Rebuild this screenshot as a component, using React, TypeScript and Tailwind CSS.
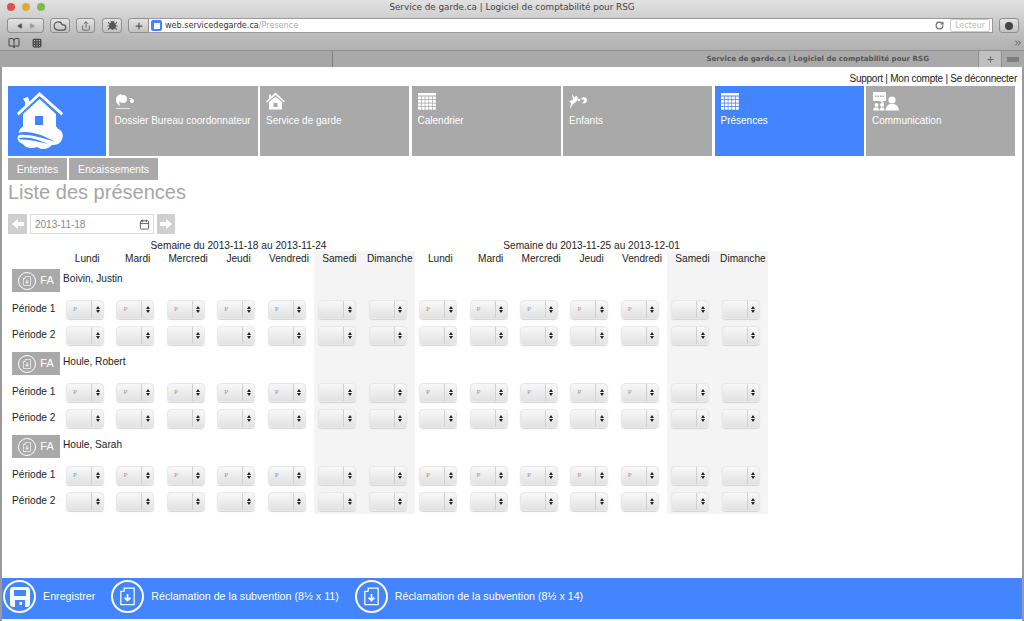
import { BookOpen, Calendar, ChevronsRight, Cloud, Grid3x3, Play, Plus, RotateCw, Share, Bug } from "lucide-react";

const days = ["Lundi", "Mardi", "Mercredi", "Jeudi", "Vendredi", "Samedi", "Dimanche"];
const columns = [...days, ...days];
const kids = ["Boivin, Justin", "Houle, Robert", "Houle, Sarah"];

function isWeekend(i: number) {
  return i % 7 >= 5;
}

function GridIcon() {
  return (
    <svg width="18" height="17" viewBox="0 0 18 17" fill="#fff">
      <rect x="0" y="0" width="18" height="2.5" />
      {[3.5, 7, 10.5, 14].map((y) =>
        [0, 3.7, 7.4, 11.1, 14.8].map((x) => <rect key={`${x}-${y}`} x={x} y={y} width="3" height="2.7" />)
      )}
    </svg>
  );
}

function HouseIcon() {
  return (
    <svg width="19" height="18" viewBox="0 0 19 18" fill="#fff">
      <path d="M9.5 0.5 L19 9.5 L18 10.5 L9.5 3 L1 10.5 L0 9.5 L3 6.6 V2.5 H5 V4.8 Z" />
      <path d="M9.5 4.5 L16 10 V17.5 H3 V10 Z M7.5 11 V15 H11.5 V11 Z" fillRule="evenodd" />
    </svg>
  );
}

function MoonIcon() {
  return (
    <svg width="22" height="17" viewBox="0 0 22 17" fill="#fff">
      <path d="M7 1 C3 1 1 4 1 7 C1 10 3 12 5 13 C4 10 4 5 7 1 Z" />
      <circle cx="8" cy="6" r="4" />
      <circle cx="17" cy="8" r="2" />
      <rect x="14" y="5" width="3" height="1" />
      <rect x="1" y="15" width="14" height="1" opacity="0.7" />
    </svg>
  );
}

function StorkIcon() {
  return (
    <svg width="20" height="17" viewBox="0 0 20 17" fill="#fff">
      <path d="M3 1 L5 4 L8 3 L9 6 L7 9 L4 11 L1 16 L2 10 L0 8 L4 7 Z" />
      <path d="M12 6 C14 3 18 4 18 7 C18 10 15 11 13 10 L15 8 C16 7 15 6 14 7 Z" />
      <circle cx="10" cy="7" r="1.2" />
    </svg>
  );
}

function PeopleIcon() {
  return (
    <svg width="28" height="19" viewBox="0 0 28 19" fill="#fff">
      <path d="M1 0 H14 V9 H11 L12 12 L8 9 H1 Z" />
      <rect x="3" y="3.5" width="1.5" height="1.5" fill="#a9a9a9" />
      <rect x="5.5" y="3.5" width="1.5" height="1.5" fill="#a9a9a9" />
      <rect x="8" y="3.5" width="1.5" height="1.5" fill="#a9a9a9" />
      <rect x="10.5" y="3.5" width="1.5" height="1.5" fill="#a9a9a9" />
      <circle cx="20" cy="8" r="3.6" />
      <path d="M13.5 18.5 C14 13 17 12 20 12 C23 12 26.5 13 27 18.5 Z" />
      <circle cx="4.5" cy="13" r="2" />
      <circle cx="10" cy="13" r="2" />
      <path d="M1 18.5 C1 16 3 15.5 4.5 15.5 C6 15.5 7 16 7 18.5 Z" />
      <path d="M7.5 18.5 C7.5 16 9 15.5 10 15.5 C11.5 15.5 12.5 16 12.5 18.5 Z" />
    </svg>
  );
}

function LogoIcon() {
  return (
    <svg width="46" height="58" viewBox="0 0 46 58" fill="#fff">
      {/* roof and chimney */}
      <path d="M22.5 0 L46 21 L44.5 23.5 L22.5 4 L1.5 23.5 L0 21 L8 13.5 V10 L6 6.5 L11 5 L12.5 9.5 Z" />
      {/* walls with the door cut out */}
      <path fillRule="evenodd" d="M22.5 7 L39 22 V36 H6 V22 Z M18 24 V34 H26 V24 Z" />
      {/* cloud */}
      <path d="M7 34 C11 31 15 32 18 33 H26 C28 32 30 32 32 34 C36 32 40 34 41 37 C45 38 47 43 45 47 C44 52 39 53 35 53 C31 58 24 58 20 55 C15 57 8 56 6 52 C1 51 -1 46 2 43 C1 38 4 36 7 34 Z" />
      {/* waves */}
      <path d="M1 41 C12 38 26 43 38 50 C26 46 12 42 2 43 Z" fill="#4285ff" />
      <path d="M2 46 C12 44 22 48 31 52 C22 50 12 47 3 47.5 Z" fill="#4285ff" />
    </svg>
  );
}

function SaveIcon() {
  return (
    <svg width="20" height="20" viewBox="0 0 20 20" fill="#fff">
      <path
        fillRule="evenodd"
        d="M3 0 H17 C18.7 0 20 1.3 20 3 V17 C20 18.7 18.7 20 17 20 H3 C1.3 20 0 18.7 0 17 V3 C0 1.3 1.3 0 3 0 Z M4 3 V9 H16 V3 Z M5 13 V20 H15 V13 Z M9.5 15 H12 V18 H9.5 Z"
      />
    </svg>
  );
}

function ClaimIcon({ size = 15 }: { size?: number }) {
  return (
    <svg width={size} height={size * 1.25} viewBox="0 0 18 22" fill="none" stroke="#fff" strokeWidth="1.5">
      <path d="M5 5 V1 H17 V21 H1 V5 H5 L1 5" />
      <path d="M9 8 V16 M5.5 12.5 L9 16 L12.5 12.5" strokeWidth="2.2" />
    </svg>
  );
}

function ChunkyArrow({ left }: { left?: boolean }) {
  return (
    <svg width="12" height="10" viewBox="0 0 12 10" fill="#fff" className={left ? "rotate-180" : ""}>
      <path d="M0 3 H6 V0 L12 5 L6 10 V7 H0 Z" />
    </svg>
  );
}

function Tile({ icon, label, active }: { icon: React.ReactNode; label: string; active?: boolean }) {
  return (
    <div className={`flex min-w-0 flex-1 flex-col px-[6px] pt-[5px] text-[10px] text-white ${active ? "bg-[#4285ff]" : "bg-[#a9a9a9]"}`}>
      <div className="flex h-[20px] items-center">{icon}</div>
      <div className="mt-[2px] whitespace-nowrap">{label}</div>
    </div>
  );
}

function FakeSelect({ value }: { value?: string }) {
  return (
    <div className="flex h-[19px] w-[38px] rounded-[4px] border border-[#e8e8e8] bg-linear-to-b from-[#f8f8f8] to-[#e2e2e2] shadow-[0_1px_1px_#d4d4d4]">
      <div className="flex w-[25px] items-center border-r border-[#d0d0d0] pl-[6px] font-['Liberation_Serif',serif] text-[7px] text-[#999]">{value}</div>
      <div className="flex flex-1 flex-col items-center justify-center gap-[1px]">
        <span className="h-0 w-0 border-x-[2.5px] border-b-[3px] border-x-transparent border-b-[#222]" />
        <span className="h-0 w-0 border-x-[2.5px] border-t-[3px] border-x-transparent border-t-[#222]" />
      </div>
    </div>
  );
}

function ChromeButton({ children, className }: { children: React.ReactNode; className?: string }) {
  return (
    <div className={`flex h-[15px] items-center justify-center rounded-[3px] border border-[#8f8f8f] bg-linear-to-b from-[#e4e4e4] to-[#c2c2c2] text-[#555] ${className ?? ""}`}>
      {children}
    </div>
  );
}

function PeriodRow({ label, value }: { label: string; value?: string }) {
  return (
    <>
      <div className="flex h-[26px] items-center whitespace-nowrap pl-[10px]">{label}</div>
      {columns.map((_, i) => (
        <div key={i} className={`flex h-[26px] items-center pl-[4px] ${isWeekend(i) ? "bg-[#f4f4f4]" : ""}`}>
          <FakeSelect value={isWeekend(i) ? undefined : value} />
        </div>
      ))}
    </>
  );
}

export default function App() {
  return (
    <div className="flex h-[621px] w-[1024px] flex-col overflow-hidden bg-[#9a9a9a] font-['Liberation_Sans',sans-serif] text-[11px] text-[#222]">
      {/* browser chrome */}
      <div className="h-[35px] bg-linear-to-b from-[#e2e2e2] to-[#bdbdbd]">
        <div className="relative flex h-[16px] items-center justify-center font-['DejaVu_Sans',sans-serif] text-[8.8px] text-[#444]">
          <div className="absolute left-[7px] top-[3px] flex gap-[7px]">
            <span className="h-[8px] w-[8px] rounded-full bg-[#e0504a]" />
            <span className="h-[8px] w-[8px] rounded-full bg-[#e0a93c]" />
            <span className="h-[8px] w-[8px] rounded-full bg-[#7fb850]" />
          </div>
          Service de garde.ca | Logiciel de comptabilité pour RSG
        </div>
        <div className="flex h-[19px] items-center pl-[7px] pr-[5px]">
          <ChromeButton className="w-[37px] gap-[6px]">
            <Play size={6} fill="#555" className="rotate-180" />
            <Play size={6} fill="#999" stroke="#999" />
          </ChromeButton>
          <ChromeButton className="ml-[6px] w-[20px]">
            <Cloud size={14} />
          </ChromeButton>
          <ChromeButton className="ml-[6px] w-[19px]">
            <Share size={10} />
          </ChromeButton>
          <ChromeButton className="ml-[7px] w-[20px]">
            <Bug size={11} fill="#555" />
          </ChromeButton>
          <ChromeButton className="ml-[6px] w-[21px] rounded-r-none">
            <Plus size={10} strokeWidth={3} />
          </ChromeButton>
          <div className="flex h-[15px] flex-1 items-center border-y border-r border-[#9a9a9a] bg-white pl-[2px] font-['DejaVu_Sans',sans-serif] text-[8.1px]">
            <span className="mr-[3px] flex h-[11px] w-[11px] items-center justify-center rounded-[2px] bg-[#4285ff]">
              <span className="h-[6px] w-[6px] bg-white" />
            </span>
            <span className="text-[#333]">web.servicedegarde.ca</span>
            <span className="text-[#aaa]">/Presence</span>
            <div className="ml-auto mr-[2px] flex items-center">
              <RotateCw size={9} strokeWidth={3} className="mr-[6px] text-[#666]" />
              <div className="flex h-[13px] w-[40px] items-center justify-center rounded-[2px] border border-[#ccc] text-[8px] text-[#bbb]">Lecteur</div>
            </div>
          </div>
          <ChromeButton className="ml-[6px] w-[20px]">
            <span className="h-[8px] w-[8px] rounded-full bg-[#444]" />
          </ChromeButton>
        </div>
      </div>
      <div className="flex h-[15px] items-center gap-[12px] bg-linear-to-b from-[#bcbcbc] to-[#b0b0b0] pl-[8px] text-[#444]">
        <BookOpen size={12} />
        <Grid3x3 size={10} strokeWidth={3} />
        <ChevronsRight size={10} className="ml-auto mr-[1px]" />
      </div>
      <div className="flex h-[17px] border-t border-[#8f8f8f] bg-[#a8a8a8]">
        <div className="w-[333px] border-r border-[#808080] bg-[#a6a6a6]" />
        <div className="flex flex-1 items-end justify-end bg-[#a9a9a9] pb-[2px] pr-[49px] font-['DejaVu_Sans',sans-serif] text-[7.1px] font-bold text-[#555]">
          Service de garde.ca | Logiciel de comptabilité pour RSG
        </div>
        <div className="flex w-[24px] items-center justify-center rounded-t-[2px] border-x border-[#8c8c8c] bg-[#c0c0c0] text-[#666]">
          <Plus size={9} strokeWidth={3} />
        </div>
        <div className="flex w-[22px] items-center justify-center text-[#666]">
          <span className="h-[5px] w-[12px] bg-[#7d7d7d]" />
        </div>
      </div>

      {/* page */}
      <div className="mx-[2px] flex min-h-0 flex-1 flex-col bg-white">
        <div className="flex h-[19px] items-end justify-end pr-[5px] text-[10px] tracking-[-0.24px] text-[#222]">Support | Mon compte | Se déconnecter</div>
        <div className="flex h-[70px] gap-[2.5px] pl-[6px] pr-[7px]">
          <div className="flex w-[98px] flex-none items-center bg-[#4285ff] pl-[9px]">
            <LogoIcon />
          </div>
          <Tile icon={<MoonIcon />} label="Dossier Bureau coordonnateur" />
          <Tile icon={<HouseIcon />} label="Service de garde" />
          <Tile icon={<GridIcon />} label="Calendrier" />
          <Tile icon={<StorkIcon />} label="Enfants" />
          <Tile icon={<GridIcon />} label="Présences" active />
          <Tile icon={<PeopleIcon />} label="Communication" />
        </div>
        <div className="mt-[2px] flex gap-[2px] pl-[6px] text-[10.5px] text-white">
          <div className="flex h-[22px] w-[59px] items-center justify-center bg-[#a9a9a9] pt-[2px]">Ententes</div>
          <div className="flex h-[22px] w-[89px] items-center justify-center bg-[#a9a9a9] pt-[2px]">Encaissements</div>
        </div>
        <h1 className="h-[34px] pl-[6px] text-[20px] leading-[25px] text-[#a6a6a6]">Liste des présences</h1>
        <div className="flex h-[20px] gap-[3px] pl-[6px]">
          <div className="flex w-[19px] items-center justify-center bg-[#cfcfcf]">
            <ChunkyArrow left />
          </div>
          <div className="flex w-[124px] items-center justify-between border border-[#dedede] pl-[4px] pr-[3px] text-[10px] text-[#888]">
            2013-11-18
            <Calendar size={11} className="text-[#555]" />
          </div>
          <div className="flex w-[18px] items-center justify-center bg-[#cfcfcf]">
            <ChunkyArrow />
          </div>
        </div>

        {/* attendance grid */}
        <div className="mt-[5px] grid grid-cols-[60px_repeat(14,50.45px)] text-[10.15px]">
          <div className="h-[12px]" />
          <div className="col-span-7 h-[12px] whitespace-nowrap text-center leading-[14px]">Semaine du 2013-11-18 au 2013-11-24</div>
          <div className="col-span-7 h-[12px] whitespace-nowrap text-center leading-[14px]">Semaine du 2013-11-25 au 2013-12-01</div>
          <div />
          {columns.map((d, i) => (
            <div key={i} className={`h-[14px] text-center leading-[16px] ${isWeekend(i) ? "bg-[#f4f4f4]" : ""}`}>
              {d}
            </div>
          ))}
          {kids.map((name) => (
            <div key={name} className="contents">
              <div className="flex h-[31px] items-center pl-[10px]">
                <div className="flex h-[23px] w-[48px] flex-none items-center justify-center gap-[4px] bg-[#a9a9a9] text-[11px] text-white">
                  <span className="flex h-[18px] w-[18px] items-center justify-center rounded-full border border-white">
                    <ClaimIcon size={8} />
                  </span>
                  FA
                </div>
              </div>
              <div className="col-span-5 flex h-[31px] items-start pl-[1px] pt-[6px]">{name}</div>
              <div className="col-span-2 h-[31px] bg-[#f4f4f4]" />
              <div className="col-span-5 h-[31px]" />
              <div className="col-span-2 h-[31px] bg-[#f4f4f4]" />
              <PeriodRow label="Période 1" value="P" />
              <PeriodRow label="Période 2" />
            </div>
          ))}
        </div>

        {/* bottom action bar */}
        <div className="mb-[2px] mt-auto flex h-[41px] items-start bg-[#4285ff] pl-[1px] pt-[2px] text-[10.7px] font-medium text-white">
          <span className="flex h-[33px] w-[33px] flex-none items-center justify-center rounded-full border-2 border-white">
            <SaveIcon />
          </span>
          <span className="ml-[7px] mt-[8px]">Enregistrer</span>
          <span className="ml-[16px] flex h-[33px] w-[33px] flex-none items-center justify-center rounded-full border-2 border-white">
            <ClaimIcon />
          </span>
          <span className="ml-[7px] mt-[8px]">Réclamation de la subvention (8½ x 11)</span>
          <span className="ml-[16px] flex h-[33px] w-[33px] flex-none items-center justify-center rounded-full border-2 border-white">
            <ClaimIcon />
          </span>
          <span className="ml-[7px] mt-[8px]">Réclamation de la subvention (8½ x 14)</span>
        </div>
      </div>
    </div>
  );
}
